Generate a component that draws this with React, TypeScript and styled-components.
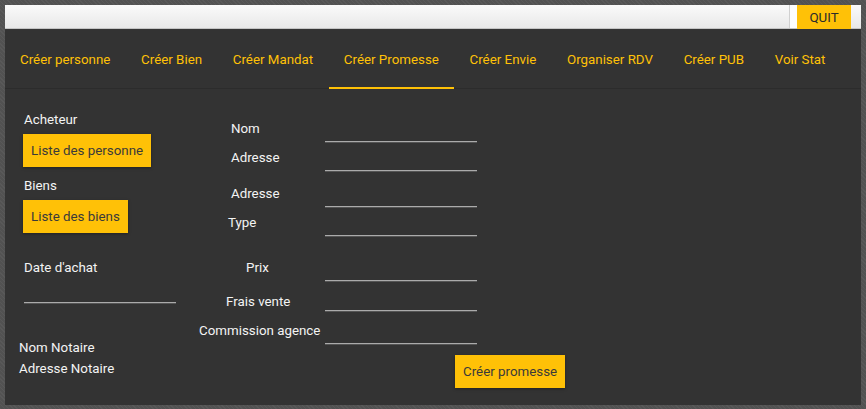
import React from "react";
import styled, { createGlobalStyle } from "styled-components";

const GlobalStyle = createGlobalStyle`
  html, body {
    margin: 0;
    padding: 0;
    background: #515151;
  }
  body {
    font-family: Roboto, "Liberation Sans", sans-serif;
    font-size: 13.33px;
  }
`;

const Frame = styled.div`
  width: 866px;
  height: 409px;
  box-sizing: border-box;
  padding: 5px 5px 4px 5px;
  background-color: #525252;
  background-image: repeating-linear-gradient(
    45deg,
    rgba(255, 255, 255, 0.04) 0 1px,
    transparent 1px 3px
  );
`;

const Window = styled.div`
  height: 100%;
  display: flex;
  flex-direction: column;
  background: #333333;
`;

const TopBar = styled.div`
  height: 24px;
  display: flex;
  justify-content: flex-end;
  padding-right: 10px;
  background: linear-gradient(#fafafa, #e8e8e8);
  border-bottom: 1px solid #c4c4c4;
  box-sizing: border-box;
`;

const Spacer = styled.div`
  width: 7px;
  background: #fdfdfd;
  border-left: 1px solid #d0d0d0;
`;

const QuitButton = styled.button`
  width: 54px;
  height: 24px;
  border: none;
  padding: 0;
  background: #ffc107;
  color: #2b2b2b;
  font-family: Roboto, "Liberation Sans", sans-serif;
  font-size: 13.33px;
`;

const Nav = styled.nav`
  height: 60px;
  display: flex;
  border-bottom: 1px solid #2c2c2c;
  box-sizing: border-box;
`;

const Tab = styled.div<{ $active?: boolean }>`
  display: flex;
  align-items: center;
  padding: 2px 15px 0 15px;
  margin-right: 0.7px;
  color: #ffc107;
  font-size: 13.33px;
  white-space: nowrap;
  box-sizing: border-box;
  border-bottom: 2px solid ${(p) => (p.$active ? "#ffc107" : "transparent")};
  margin-bottom: -1px;
`;

const Body = styled.div`
  flex: 1;
  display: flex;
  padding-left: 14px;
`;

const LeftCol = styled.div`
  width: 180px;
  display: flex;
  flex-direction: column;
  align-items: flex-start;
`;

const Label = styled.div<{ $mt?: number; $indent?: number }>`
  color: #f4f4f4;
  line-height: 15px;
  margin-top: ${(p) => p.$mt ?? 0}px;
  padding-left: ${(p) => p.$indent ?? 0}px;
  white-space: nowrap;
`;

const YellowButton = styled.button<{ $mt?: number; $ml?: number }>`
  height: 33px;
  margin-top: ${(p) => p.$mt ?? 0}px;
  margin-left: ${(p) => p.$ml ?? 0}px;
  padding: 0 8px 0 8px;
  border: none;
  background: #ffc107;
  color: #3a3a3a;
  font-family: Roboto, "Liberation Sans", sans-serif;
  font-size: 13.33px;
  white-space: nowrap;
  box-shadow: 0 1px 3px rgba(0, 0, 0, 0.35);
`;

const LineInput = styled.div<{ $width?: number }>`
  width: ${(p) => p.$width ?? 152}px;
  height: 28px;
  box-sizing: border-box;
  border-bottom: 1px solid #ababab;
  box-shadow: 0 1px 0 rgba(120, 120, 120, 0.5);
`;

const DateInput = styled(LineInput)`
  margin-left: 5px;
`;

const Form = styled.div`
  display: flex;
  flex-direction: column;
  padding-top: 25px;
`;

const Row = styled.div<{ $mt?: number }>`
  display: grid;
  grid-template-columns: 126px 152px;
  align-items: end;
  margin-top: ${(p) => p.$mt ?? 0}px;
`;

const RowLabel = styled.div<{ $indent: number; $lift?: number }>`
  color: #f4f4f4;
  line-height: 15px;
  padding-left: ${(p) => p.$indent}px;
  padding-bottom: ${(p) => p.$lift ?? 6}px;
  white-space: nowrap;
`;

const Actions = styled.div`
  display: flex;
  padding-left: 256px;
  margin-top: 11px;
`;

const tabs = [
  "Créer personne",
  "Créer Bien",
  "Créer Mandat",
  "Créer Promesse",
  "Créer Envie",
  "Organiser RDV",
  "Créer PUB",
  "Voir Stat",
];

const fields = [
  { label: "Nom", indent: 32, mt: 0 },
  { label: "Adresse", indent: 32, mt: 1 },
  { label: "Adresse", indent: 32, mt: 8 },
  { label: "Type", indent: 29, mt: 1 },
  { label: "Prix", indent: 47, mt: 17 },
  { label: "Frais vente", indent: 27, mt: 2, lift: 2 },
  { label: "Commission agence", indent: 0, mt: 5 },
];

export default function App() {
  return (
    <>
      <GlobalStyle />
      <Frame>
        <Window>
          <TopBar>
            <Spacer />
            <QuitButton>QUIT</QuitButton>
          </TopBar>
          <Nav>
            {tabs.map((t) => (
              <Tab key={t} $active={t === "Créer Promesse"}>
                {t}
              </Tab>
            ))}
          </Nav>
          <Body>
            <LeftCol>
              <Label $mt={23} $indent={5}>
                Acheteur
              </Label>
              <YellowButton $mt={7} $ml={4}>
                Liste des personne
              </YellowButton>
              <Label $mt={11} $indent={5}>
                Biens
              </Label>
              <YellowButton $mt={7} $ml={4}>
                Liste des biens
              </YellowButton>
              <Label $mt={27} $indent={5}>
                Date d'achat
              </Label>
              <DateInput />
              <Label $mt={37}>Nom Notaire</Label>
              <Label $mt={6}>Adresse Notaire</Label>
            </LeftCol>
            <Form>
              {fields.map((f, i) => (
                <Row key={i} $mt={f.mt}>
                  <RowLabel $indent={f.indent} $lift={f.lift}>
                    {f.label}
                  </RowLabel>
                  <LineInput />
                </Row>
              ))}
              <Actions>
                <YellowButton>Créer promesse</YellowButton>
              </Actions>
            </Form>
          </Body>
        </Window>
      </Frame>
    </>
  );
}
